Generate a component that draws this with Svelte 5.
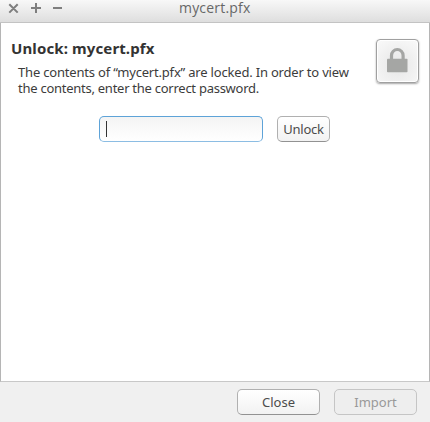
<script>
  let filename = "mycert.pfx";
  let password = "";
</script>

<div class="window">
  <header class="titlebar">
    <div class="controls">
      <svg width="54" height="14" viewBox="0 0 54 14" aria-hidden="true">
        <path d="M1.3 4.2l8.4 8.4M9.7 4.2l-8.4 8.4M23 8h10M28 3v10M45 8h9" />
      </svg>
    </div>
    <span class="title">{filename}</span>
  </header>

  <main class="content">
    <div class="intro">
      <div class="message">
        <h1>Unlock: {filename}</h1>
        <p class="first">The contents of “{filename}” are locked. In order to view</p>
        <p class="second">the contents, enter the correct password.</p>
      </div>
      <div class="lock">
        <svg width="41" height="42" viewBox="0 0 41 42" aria-hidden="true">
          <path d="M14.5 20v-4.5a5.8 6 0 0 1 11.6 0V20" />
          <rect x="10" y="18.7" width="20.5" height="13.6" rx="0.8" />
        </svg>
      </div>
    </div>

    <form class="unlock" on:submit|preventDefault>
      <label class="entry">
        <span class="caret"></span>
        <input type="password" aria-label="Password" bind:value={password} />
      </label>
      <button class="small" type="submit">Unlock</button>
    </form>
  </main>

  <footer>
    <button type="button">Close</button>
    <button type="button" disabled>Import</button>
  </footer>
</div>

<style>
  :global(body) {
    overflow: hidden;
  }

  .window {
    width: 430px;
    height: 422px;
    display: flex;
    flex-direction: column;
    box-sizing: border-box;
    background: #f0f0f0;
    color: #3c3c3c;
    font-family: "Noto Sans", "Open Sans", sans-serif;
    font-size: 13px;
  }

  .titlebar {
    display: grid;
    grid-template-columns: 179px 1fr;
    height: 22px;
    border-bottom: 1px solid #c3c3c3;
    background: linear-gradient(#f8f8f8, #dedede);
  }

  .controls {
    padding-left: 8px;
  }

  .controls svg {
    display: block;
    fill: none;
    stroke: #7e7e7e;
    stroke-width: 2;
  }

  .title {
    font-family: "Open Sans", sans-serif;
    font-size: 14px;
    line-height: 16px;
    letter-spacing: 0.2px;
    color: #676767;
    white-space: nowrap;
  }

  .content {
    flex: 1;
    box-sizing: border-box;
    border: solid #b5b5b5;
    border-width: 0 1px;
    border-bottom: 1px solid #c8c8c8;
    background: #fff;
  }

  .intro {
    display: flex;
    justify-content: space-between;
    height: 93px;
    padding: 16px 10px 0 10px;
    box-sizing: border-box;
  }

  h1 {
    margin: 0 0 6px;
    font-size: 15px;
    line-height: 19px;
    font-weight: 700;
    letter-spacing: 0.12px;
    color: #333;
    white-space: nowrap;
  }

  p {
    margin: 0 0 0 7px;
    line-height: 16px;
    white-space: nowrap;
  }

  .first {
    letter-spacing: -0.19px;
  }

  .second {
    letter-spacing: -0.26px;
  }

  .lock {
    width: 41px;
    height: 42px;
    border: 1px solid #a0a0a0;
    border-radius: 4px;
    background: radial-gradient(circle at 50% 60%, #e6e6e6, #fafafa);
    box-shadow: 0 1px 2px rgba(0, 0, 0, 0.35), inset 0 0 0 1px #fff;
  }

  .lock svg {
    display: block;
  }

  .lock path {
    fill: none;
    stroke: #a5a6a4;
    stroke-width: 3.2;
  }

  .lock rect {
    fill: #a5a6a4;
  }

  .unlock {
    display: flex;
    gap: 14px;
    padding-left: 98px;
  }

  .entry {
    display: flex;
    align-items: center;
    width: 164px;
    height: 26px;
    box-sizing: border-box;
    padding: 0 6px;
    border: 1px solid #5ea3d8;
    border-bottom-color: #8cbde3;
    border-radius: 5px;
    background: linear-gradient(#f4f4f4, #fff);
  }

  .caret {
    width: 1px;
    height: 16px;
    background: #333;
  }

  input {
    flex: 1;
    min-width: 0;
    padding: 0;
    border: 0;
    outline: 0;
    background: transparent;
    font: inherit;
  }

  button {
    display: flex;
    align-items: center;
    justify-content: center;
    width: 83px;
    height: 26px;
    box-sizing: border-box;
    padding: 0;
    border: 1px solid #b0b0b0;
    border-bottom-color: #929292;
    border-radius: 5px;
    background: linear-gradient(#fff, #f2f2f2);
    color: #4c4c4c;
    font: inherit;
    line-height: 16px;
  }

  button.small {
    width: 53px;
    letter-spacing: -0.2px;
  }

  button:disabled {
    border-color: #c5c5c5;
    background: #eee;
    color: #999;
  }

  footer {
    display: flex;
    justify-content: flex-end;
    gap: 14px;
    height: 40px;
    box-sizing: border-box;
    padding: 7px 13px 0 0;
  }
</style>
